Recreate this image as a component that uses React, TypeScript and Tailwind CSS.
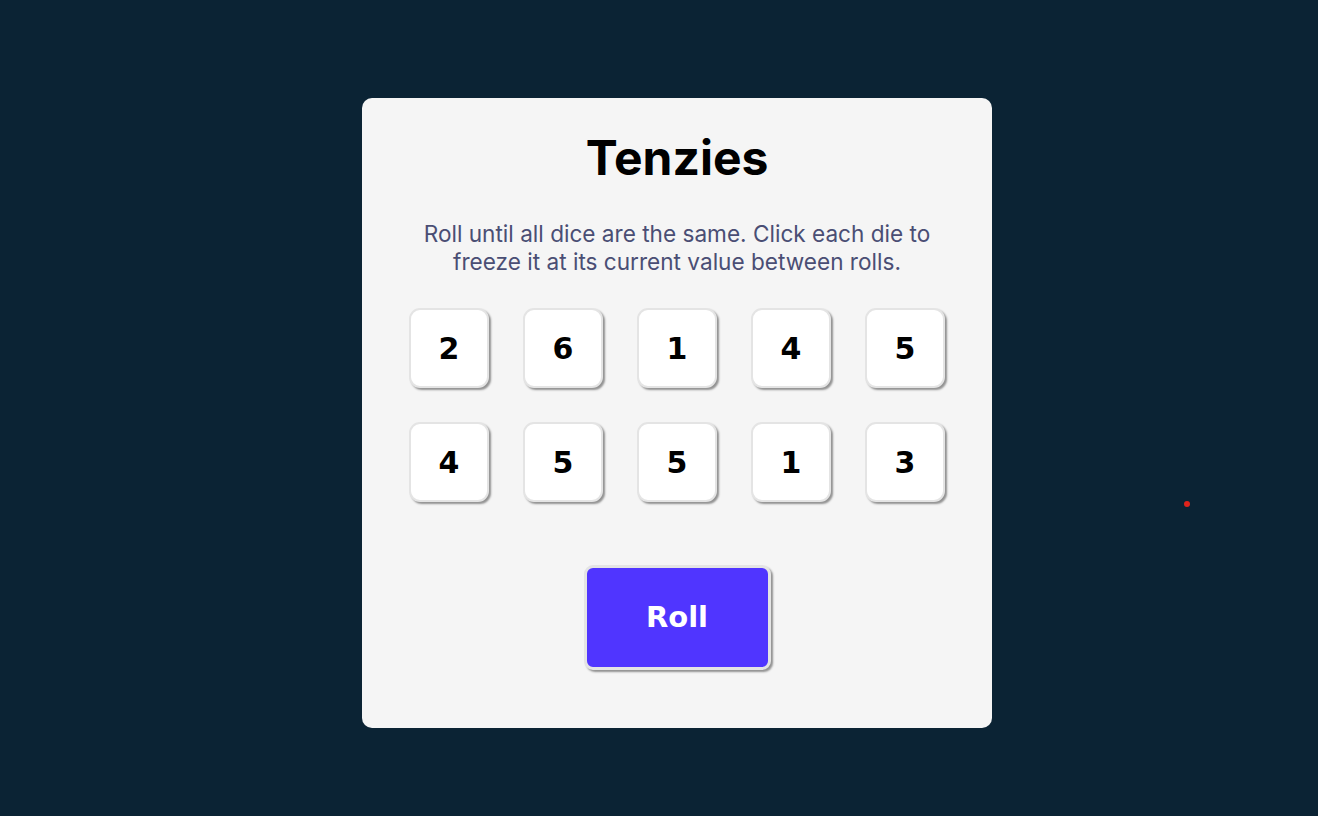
import React from "react";

const dice = [2, 6, 1, 4, 5, 4, 5, 5, 1, 3];

export default function App() {
  return (
    <div className="relative min-h-[816px] w-full bg-[#0b2334] pt-[98px] pl-[36px] flex justify-center items-start">
      <main className="w-[630px] h-[630px] bg-[#f5f5f5] rounded-[10px] flex flex-col items-center pt-[30px]">
        <h1
          className="text-[48px] leading-[60px] font-bold text-black"
          style={{ fontFamily: "Inter, 'Noto Sans', sans-serif" }}
        >
          Tenzies
        </h1>
        <p
          className="mt-[32px] w-[540px] text-center text-[22.6px] leading-[28px] text-[#4a4e74]"
          style={{ fontFamily: "Inter, 'Noto Sans', sans-serif" }}
        >
          Roll until all dice are the same. Click each die to freeze it at its current value between rolls.
        </p>
        <div className="mt-[32px] grid grid-cols-5 gap-[34px]">
          {dice.map((d, i) => (
            <button
              key={i}
              className="w-[80px] h-[80px] bg-white rounded-[11px] border-2 border-[#e4e4e4] shadow-[2px_2px_2px_#929292] flex items-center justify-center text-[30px] font-bold text-black"
              style={{ fontFamily: "'DejaVu Sans', Verdana, sans-serif" }}
            >
              {d}
            </button>
          ))}
        </div>
        <button
          className="mt-[63px] w-[187px] h-[105px] bg-[#5035ff] rounded-[9px] border-[3px] border-[#e4e4e4] shadow-[2px_2px_2px_#929292] text-white text-[29px] font-bold flex items-center justify-center"
          style={{ fontFamily: "'DejaVu Sans', Verdana, sans-serif" }}
        >
          Roll
        </button>
      </main>
      <div className="absolute left-[1184px] top-[501px] w-[6px] h-[6px] rounded-full bg-[#e0231b]" />
    </div>
  );
}
